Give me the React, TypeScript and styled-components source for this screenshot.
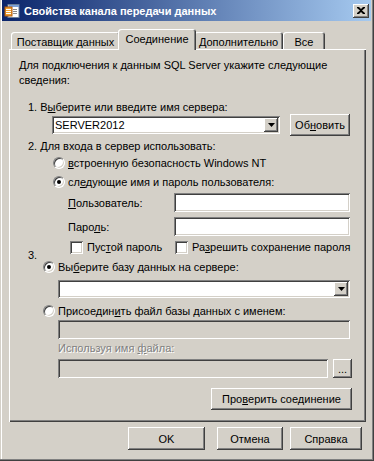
import React from 'react';
import styled, { createGlobalStyle, css } from 'styled-components';

const Global = createGlobalStyle`
  html, body { margin: 0; padding: 0; background: #d4d0c8; }
  body { font-family: "Liberation Sans", Arial, sans-serif; font-size: 11px; color: #000; }
  #root { width: 374px; height: 461px; }
`;

const raised = css`
  box-shadow: inset -1px -1px #404040, inset 1px 1px #ffffff, inset -2px -2px #808080;
`;
const sunken = css`
  box-shadow: inset 1px 1px #808080, inset -1px -1px #ffffff, inset 2px 2px #404040, inset -2px -2px #d4d0c8;
`;

const Window = styled.div`
  width: 374px;
  height: 461px;
  box-sizing: border-box;
  background: #d4d0c8;
  padding: 0 3px 3px 2px;
  box-shadow: inset -1px -1px #404040, inset -2px -2px #808080, inset 1px 0 #d4d0c8, inset 2px 0 #ffffff;
  display: flex;
  flex-direction: column;
`;

const TitleBar = styled.div`
  height: 21px;
  display: flex;
  align-items: center;
  gap: 4px;
  padding: 0 2px;
  background: linear-gradient(90deg, #0a246a 0%, #a6caf0 100%);
`;

const TitleText = styled.span`
  flex: 1;
  color: #fff;
  font-weight: bold;
  font-size: 11px;
  white-space: nowrap;
`;

const CloseButton = styled.div`
  width: 16px;
  height: 14px;
  background: #d4d0c8;
  ${raised};
  display: flex;
  align-items: center;
  justify-content: center;
`;

const Body = styled.div`
  flex: 1;
  display: flex;
  flex-direction: column;
  padding: 8px 5px 0 7px;
`;

const TabStrip = styled.div`
  height: 20px;
  display: flex;
  align-items: flex-end;
  padding-left: 2px;
`;

const Tab = styled.div<{ $width: number; $active?: boolean }>`
  position: relative;
  box-sizing: border-box;
  width: ${(p) => p.$width + (p.$active ? 4 : 0)}px;
  height: ${(p) => (p.$active ? 21 : 17)}px;
  margin: ${(p) => (p.$active ? '0 -2px -1px -2px' : '0')};
  z-index: ${(p) => (p.$active ? 1 : 0)};
  padding-top: 3px;
  line-height: 14px;
  text-align: center;
  white-space: nowrap;
  background: #d4d0c8;
  border-radius: 3px 3px 0 0;
  box-shadow: inset 1px 1px #ffffff, inset -1px 0 #404040, inset -2px 0 #808080;
`;

const Panel = styled.div`
  box-sizing: border-box;
  height: 373px;
  padding: 9px 14px 0 10px;
  display: flex;
  flex-direction: column;
  box-shadow: inset 1px 1px #ffffff, inset -1px -1px #404040, inset -2px -2px #808080;
`;

const Intro = styled.div`
  line-height: 15px;
  margin-right: 20px;
`;

const Label = styled.div<{ $top: number; $indent: number; $disabled?: boolean }>`
  margin-top: ${(p) => p.$top}px;
  padding-left: ${(p) => p.$indent}px;
  line-height: 14px;
  white-space: nowrap;
  color: ${(p) => (p.$disabled ? '#808080' : '#000')};
  text-shadow: ${(p) => (p.$disabled ? '1px 1px #ffffff' : 'none')};
`;

const Row = styled.div<{ $top: number; $indent: number; $height: number }>`
  margin-top: ${(p) => p.$top}px;
  padding-left: ${(p) => p.$indent}px;
  height: ${(p) => p.$height}px;
  display: flex;
  align-items: center;
  white-space: nowrap;
`;

const Key = styled.span`
  text-decoration: underline;
`;

const Combo = styled.div<{ $width: number }>`
  box-sizing: border-box;
  width: ${(p) => p.$width}px;
  height: 18px;
  background: #fff;
  ${sunken};
  padding: 2px;
  display: flex;
  align-items: center;
`;

const ComboText = styled.span`
  flex: 1;
  padding-left: 1px;
  line-height: 14px;
`;

const ComboArrow = styled.div`
  width: 14px;
  height: 14px;
  background: #d4d0c8;
  ${raised};
  display: flex;
  align-items: center;
  justify-content: center;
`;

const Field = styled.div<{ $width: number; $disabled?: boolean }>`
  box-sizing: border-box;
  width: ${(p) => p.$width}px;
  height: 19px;
  background: ${(p) => (p.$disabled ? '#d4d0c8' : '#ffffff')};
  ${sunken};
`;

const Button = styled.div<{ $width: number; $height?: number; $gap?: number }>`
  box-sizing: border-box;
  width: ${(p) => p.$width}px;
  height: ${(p) => p.$height ?? 22}px;
  margin-left: ${(p) => p.$gap ?? 0}px;
  background: #d4d0c8;
  ${raised};
  display: flex;
  align-items: center;
  justify-content: center;
  white-space: nowrap;
`;

const Radio = styled.span<{ $checked?: boolean }>`
  position: relative;
  box-sizing: border-box;
  flex: none;
  width: 12px;
  height: 12px;
  margin-right: 3px;
  border-radius: 50%;
  background: #fff;
  border: 1px solid;
  border-color: #808080 #ffffff #ffffff #808080;
  box-shadow: inset 1px 1px #404040, inset -1px -1px #d4d0c8;
  &::after {
    content: '';
    display: ${(p) => (p.$checked ? 'block' : 'none')};
    position: absolute;
    left: 3px;
    top: 3px;
    width: 4px;
    height: 4px;
    border-radius: 50%;
    background: #000;
  }
`;

const Check = styled.span`
  box-sizing: border-box;
  flex: none;
  width: 13px;
  height: 13px;
  margin-right: 4px;
  background: #fff;
  ${sunken};
`;

const CheckItem = styled.div<{ $width?: number }>`
  display: flex;
  align-items: center;
  width: ${(p) => (p.$width ? p.$width + 'px' : 'auto')};
`;

const FieldLabel = styled.span`
  width: 106px;
`;

const Section = styled.div`
  margin-top: -6px;
  display: flex;
  align-items: flex-start;
  padding-left: 9px;
`;

const SectionNumber = styled.span`
  width: 15px;
  line-height: 14px;
`;

const SectionBody = styled.div`
  padding-top: 12px;
  display: flex;
  align-items: center;
  height: 14px;
  white-space: nowrap;
`;

const Footer = styled.div`
  margin-top: 5px;
  padding-right: 4px;
  display: flex;
  justify-content: flex-end;
`;

const AppIcon = () => (
  <svg width="16" height="16" viewBox="0 0 16 16">
    <rect x="4" y="1.5" width="11" height="13" fill="#ffffff" stroke="#6b7f9a" />
    <rect x="5" y="2" width="10" height="2" fill="#7aa0d8" />
    <line x1="9" y1="6.5" x2="13" y2="6.5" stroke="#8a8a8a" />
    <line x1="9" y1="8.5" x2="13" y2="8.5" stroke="#8a8a8a" />
    <line x1="9" y1="10.5" x2="13" y2="10.5" stroke="#8a8a8a" />
    <rect x="1" y="4" width="7" height="9" fill="#f0a030" stroke="#b05a10" />
    <line x1="2" y1="6.5" x2="7" y2="6.5" stroke="#ffffff" />
    <line x1="2" y1="8.5" x2="7" y2="8.5" stroke="#ffffff" />
    <line x1="2" y1="10.5" x2="7" y2="10.5" stroke="#ffffff" />
  </svg>
);

const CloseGlyph = () => (
  <svg width="8" height="7" viewBox="0 0 8 7">
    <path d="M0 0h2l2 2 2-2h2v1L5 3.5 8 6v1H6L4 5 2 7H0V6l3-2.5L0 1z" fill="#000" />
  </svg>
);

const ArrowGlyph = () => (
  <svg width="7" height="4" viewBox="0 0 7 4">
    <path d="M0 0h7L3.5 4z" fill="#000" />
  </svg>
);

export default function App() {
  return (
    <>
      <Global />
      <Window>
        <TitleBar>
          <AppIcon />
          <TitleText>Свойства канала передачи данных</TitleText>
          <CloseButton>
            <CloseGlyph />
          </CloseButton>
        </TitleBar>
        <Body>
          <TabStrip>
            <Tab $width={109}>Поставщик данных</Tab>
            <Tab $width={74} $active>
              Соединение
            </Tab>
            <Tab $width={89}>Дополнительно</Tab>
            <Tab $width={42}>Все</Tab>
          </TabStrip>
          <Panel>
            <Intro>Для подключения к данным SQL Server укажите следующие сведения:</Intro>
            <Label $top={12} $indent={9}>
              1. В<Key>ы</Key>берите или введите имя сервера:
            </Label>
            <Row $top={0} $indent={33} $height={22}>
              <Combo $width={228}>
                <ComboText>SERVER2012</ComboText>
                <ComboArrow>
                  <ArrowGlyph />
                </ComboArrow>
              </Combo>
              <Button $width={60} $gap={10}>
                Об<Key>н</Key>овить
              </Button>
            </Row>
            <Label $top={3} $indent={9}>
              2. Для входа в сервер использовать:
            </Label>
            <Row $top={3} $indent={34} $height={14}>
              <Radio />
              <span>
                <Key>в</Key>строенную безопасность Windows NT
              </span>
            </Row>
            <Row $top={5} $indent={34} $height={14}>
              <Radio $checked />
              <span>
                сл<Key>е</Key>дующие имя и пароль пользователя:
              </span>
            </Row>
            <Row $top={4} $indent={49} $height={19}>
              <FieldLabel>
                <Key>П</Key>ользователь:
              </FieldLabel>
              <Field $width={176} />
            </Row>
            <Row $top={5} $indent={49} $height={19}>
              <FieldLabel>
                Паро<Key>л</Key>ь:
              </FieldLabel>
              <Field $width={176} />
            </Row>
            <Row $top={4} $indent={51} $height={14}>
              <CheckItem $width={105}>
                <Check />
                <span>
                  Пус<Key>т</Key>ой пароль
                </span>
              </CheckItem>
              <CheckItem>
                <Check />
                <span>
                  Ра<Key>з</Key>решить сохранение пароля
                </span>
              </CheckItem>
            </Row>
            <Section>
              <SectionNumber>3.</SectionNumber>
              <SectionBody>
                <Radio $checked />
                <span>
                  Вы<Key>б</Key>ерите базу данных на сервере:
                </span>
              </SectionBody>
            </Section>
            <Row $top={6} $indent={39} $height={18}>
              <Combo $width={292}>
                <ComboText />
                <ComboArrow>
                  <ArrowGlyph />
                </ComboArrow>
              </Combo>
            </Row>
            <Row $top={6} $indent={24} $height={14}>
              <Radio />
              <span>
                Присоедин<Key>и</Key>ть файл базы данных с именем:
              </span>
            </Row>
            <Row $top={2} $indent={39} $height={19}>
              <Field $width={292} $disabled />
            </Row>
            <Label $top={2} $indent={39} $disabled>
              Используя имя <Key>ф</Key>айла:
            </Label>
            <Row $top={4} $indent={39} $height={19}>
              <Field $width={270} $disabled />
              <Button $width={19} $height={19} $gap={5}>
                ...
              </Button>
            </Row>
            <Row $top={10} $indent={192} $height={22}>
              <Button $width={141}>
                Про<Key>в</Key>ерить соединение
              </Button>
            </Row>
          </Panel>
          <Footer>
            <Button $width={77} $height={23}>
              OK
            </Button>
            <Button $width={66} $height={23} $gap={12}>
              Отмена
            </Button>
            <Button $width={72} $height={23} $gap={7}>
              Справка
            </Button>
          </Footer>
        </Body>
      </Window>
    </>
  );
}
